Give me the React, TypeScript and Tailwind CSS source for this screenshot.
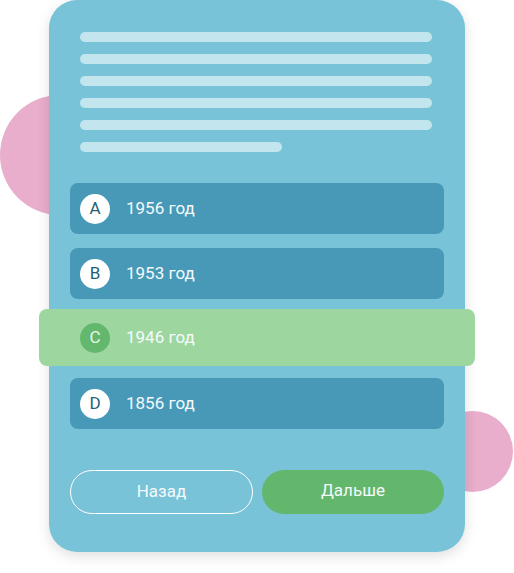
const lines = [352, 352, 352, 352, 352, 202];

type Option = { letter: string; text: string; picked?: boolean };

const options: Option[] = [
  { letter: "A", text: "1956 год" },
  { letter: "B", text: "1953 год" },
  { letter: "C", text: "1946 год", picked: true },
  { letter: "D", text: "1856 год" },
];

const OptionRow = ({ letter, text, picked }: Option) => (
  <div
    className={
      picked
        ? "flex h-[57px] items-center rounded-lg bg-[#9dd79f] pl-[41px] mx-[-31px]"
        : "flex h-[51px] items-center rounded-lg bg-[#4799b7] pl-[10px]"
    }
  >
    <div
      className={
        picked
          ? "flex h-[30px] w-[30px] items-center justify-center rounded-full bg-[#64b86d] text-[17px] text-[#e9f6ea]"
          : "flex h-[30px] w-[30px] items-center justify-center rounded-full bg-white text-[17px] text-[#1f5f73]"
      }
    >
      {letter}
    </div>
    <span className="ml-[16px] text-[17px] text-[#f4fafc]">{text}</span>
  </div>
);

export default function App() {
  return (
    <div className="relative h-[573px] w-[514px] overflow-hidden bg-white" style={{ fontFamily: "Roboto, sans-serif" }}>
      <div className="absolute left-0 top-[95px] h-[120px] w-[120px] rounded-full bg-[#e8aecc]" />
      <div className="absolute left-[432px] top-[411px] h-[81px] w-[81px] rounded-full bg-[#e8aecc]" />

      <div className="relative ml-[49px] flex w-[416px] flex-col rounded-[28px] bg-[#78c3d8] px-[21px] pb-[38px] pt-[32px] shadow-[0_4px_14px_rgba(0,0,0,0.13)]">
        <div className="flex flex-col gap-[12px] pl-[10px]">
          {lines.map((w, i) => (
            <div key={i} className="h-[10px] rounded-full bg-[#c2e5ee]" style={{ width: w }} />
          ))}
        </div>

        <div className="mt-[31px] flex flex-col">
          <OptionRow {...options[0]} />
          <div className="mt-[14px]">
            <OptionRow {...options[1]} />
          </div>
          <div className="mt-[10px]">
            <OptionRow {...options[2]} />
          </div>
          <div className="mt-[12px]">
            <OptionRow {...options[3]} />
          </div>
        </div>

        <div className="mt-[41px] flex gap-[9px]">
          <button className="h-[44px] w-[183px] rounded-full border border-white text-[17px] text-[#f4fafc]">
            Назад
          </button>
          <button className="h-[44px] flex-1 rounded-full bg-[#63b76c] pb-[2px] text-[17px] text-[#f4fafc]">
            Дальше
          </button>
        </div>
      </div>
    </div>
  );
}
